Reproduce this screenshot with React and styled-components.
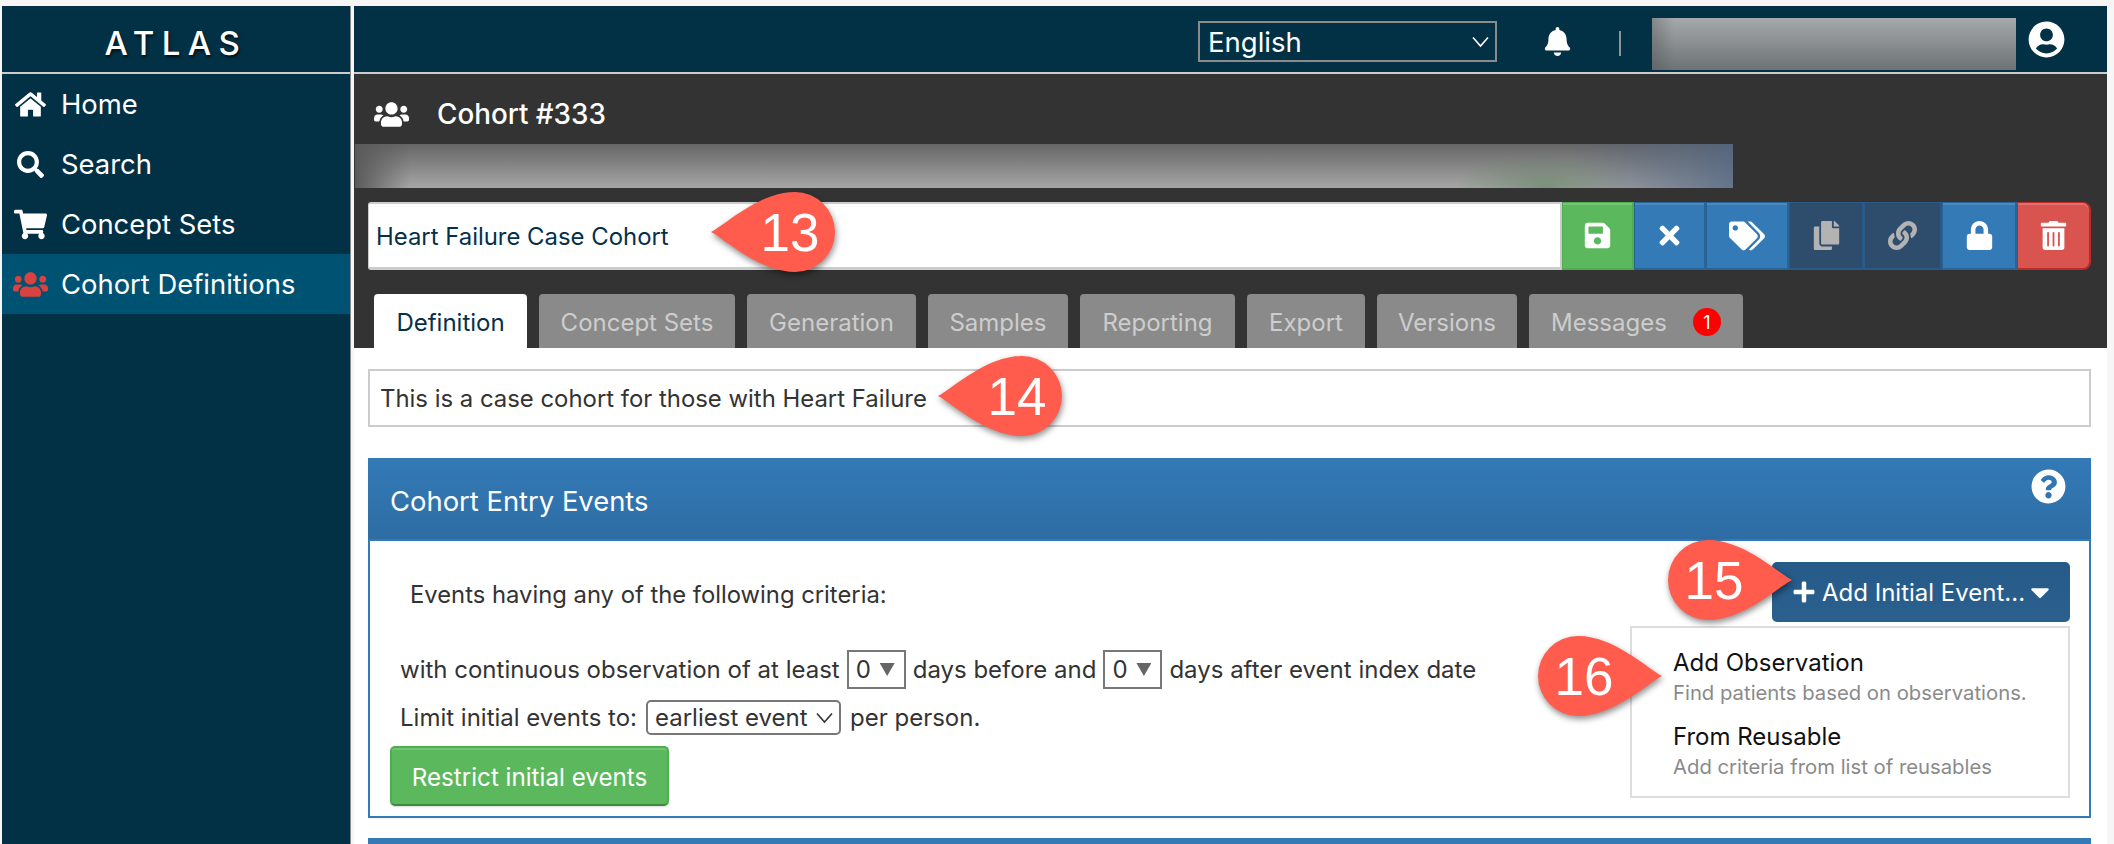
import React from "react";
import styled, { createGlobalStyle } from "styled-components";
import {
  FaBell,
  FaCaretDown,
  FaCopy,
  FaHome,
  FaLink,
  FaLock,
  FaPlus,
  FaQuestionCircle,
  FaSave,
  FaSearch,
  FaShoppingCart,
  FaTags,
  FaTimes,
  FaTrashAlt,
  FaUserCircle,
  FaUsers,
} from "react-icons/fa";

const GlobalStyle = createGlobalStyle`
  html, body {
    margin: 0;
    height: 100%;
    overflow: hidden;
    background: #f6f6f6;
    font-family: Inter, "Liberation Sans", sans-serif;
  }
  * { box-sizing: border-box; }
`;

const Page = styled.div`
  display: flex;
  height: 844px;
  padding: 6px 7px 0 2px;
  overflow: hidden;
`;

const Sidebar = styled.aside`
  flex: none;
  width: 349px;
  background: #023146;
  border-right: 1px solid #8a8a8a;
`;

const Brand = styled.div`
  height: 68px;
  padding-top: 8px;
  border-bottom: 2px solid #ccc;
  display: flex;
  align-items: center;
  justify-content: center;
  color: #fff;
  font-size: 33px;
  font-weight: 500;
  letter-spacing: 7.5px;
  text-shadow: 1px 2px 3px rgba(0, 0, 0, 0.7);
`;

const NavItem = styled.div`
  height: 60px;
  display: flex;
  align-items: center;
  gap: 13px;
  padding-left: 10px;
  color: #fff;
  font-size: 27.4px;
  background: ${(p) => (p.$active ? "#005272" : "transparent")};
`;

const NavIcon = styled.span`
  flex: none;
  width: 36px;
  display: flex;
  justify-content: center;
  font-size: ${(p) => p.$size}px;
  color: ${(p) => (p.$active ? "#d9423f" : "#fff")};
`;

const Main = styled.main`
  flex: 1;
  min-width: 0;
  margin-left: 3px;
  background: #fff;
`;

const TopBar = styled.header`
  height: 68px;
  background: #023146;
  border-bottom: 2px solid #ccc;
  display: flex;
  align-items: center;
  color: #fff;
  padding-left: 844px;
`;

const LanguageSelect = styled.div`
  width: 299px;
  height: 41px;
  margin-top: 5px;
  border: 2px solid #8b8b8b;
  display: flex;
  align-items: center;
  justify-content: space-between;
  padding: 0 6px 0 8px;
  font-size: 27.5px;
`;

const BellWrap = styled.span`
  display: flex;
  margin: 5px 0 0 46px;
  font-size: 29px;
`;

const Divider = styled.span`
  width: 2px;
  height: 25px;
  margin: 8px 31px 0 47px;
  background: #8d979d;
`;

const BlurredUser = styled.div`
  width: 364px;
  height: 52px;
  margin-top: 10px;
  background:
    linear-gradient(90deg, rgba(70, 76, 80, 0.35), transparent 6%),
    linear-gradient(180deg, #a6a9ab, #6c7275);
`;

const AvatarWrap = styled.span`
  display: flex;
  margin-left: 12px;
  font-size: 37px;
`;

const Hero = styled.section`
  background: #333;
  padding: 0 16px 0 14px;
`;

const TitleRow = styled.div`
  height: 70px;
  display: flex;
  align-items: center;
  gap: 28px;
  padding: 10px 0 0 6px;
  color: #fff;
  font-size: 27.8px;
  font-weight: 500;
  svg {
    font-size: 35px;
  }
`;

const BlurredBar = styled.div`
  width: 1378px;
  height: 44px;
  margin-left: -13px;
  background:
    radial-gradient(ellipse 90px 36px at 1190px 44px, rgba(90, 130, 90, 0.55), transparent),
    linear-gradient(90deg, transparent 88%, rgba(80, 100, 130, 0.75) 100%),
    linear-gradient(90deg, #5a5a5a, transparent 4%),
    linear-gradient(180deg, #666, #a6a6a6);
`;

const NameRow = styled.div`
  position: relative;
  display: flex;
  height: 68px;
  margin-top: 14px;
`;

const NameInput = styled.div`
  flex: 1;
  display: flex;
  align-items: center;
  padding: 2px 0 0 7px;
  background: #fff;
  border: 1px solid #ccc;
  border-top-width: 2px;
  border-bottom-width: 3px;
  border-right-width: 2px;
  border-radius: 3px 0 0 3px;
  color: #06304a;
  font-size: 23.9px;
`;

const tones = {
  green: ["#5cb85c", "#4cae4c", "#73c473"],
  blue: ["#337ab7", "#2a6396", "#4a8ac1"],
  navy: ["#2e4d6d", "#2a5a88", "#2e4d6d"],
  red: ["#d9534f", "#b92c28", "#e2706d"],
};

const ToolButton = styled.div`
  flex: none;
  width: ${(p) => p.$width}px;
  display: flex;
  align-items: center;
  justify-content: center;
  background: ${(p) => tones[p.$tone][0]};
  border: 1px solid ${(p) => tones[p.$tone][1]};
  border-width: 1px 2px 2px 1px;
  box-shadow: inset 0 2px 0 ${(p) => tones[p.$tone][2]};
  color: ${(p) => (p.$tone === "navy" ? "#b3b3b3" : "#fff")};
  font-size: ${(p) => p.$size || 29}px;
  border-radius: ${(p) => (p.$tone === "red" ? "0 8px 8px 0" : "0")};
`;

const Tabs = styled.nav`
  display: flex;
  gap: 12px;
  margin-top: 24px;
  padding: 0 0 0 6px;
`;

const Tab = styled.div`
  height: 54px;
  width: ${(p) => p.$width}px;
  display: flex;
  align-items: center;
  justify-content: ${(p) => (p.$badge ? "flex-start" : "center")};
  padding: 2px 0 0 ${(p) => (p.$badge ? "22px" : "0")};
  background: ${(p) => (p.$active ? "#fff" : "#8a8a8a")};
  color: ${(p) => (p.$active ? "#06304a" : "#cdcdcd")};
  border-radius: 4px 4px 0 0;
  font-size: 24px;
`;

const Badge = styled.span`
  width: 28px;
  height: 28px;
  margin-left: 26px;
  border-radius: 50%;
  background: #f00;
  color: #fff;
  font-size: 18px;
  display: flex;
  align-items: center;
  justify-content: center;
`;

const Content = styled.section`
  padding: 21px 16px 0 14px;
`;

const Description = styled.div`
  position: relative;
  height: 58px;
  border: 2px solid #ccc;
  display: flex;
  align-items: center;
  padding-left: 10px;
  color: #333;
  font-size: 23.9px;
`;

const Panel = styled.div`
  margin-top: 31px;
  border: 2px solid #337ab7;
  border-top: 0;
  box-shadow: 0 1px 2px rgba(0, 0, 0, 0.05);
`;

const PanelHeading = styled.div`
  height: 83px;
  margin: 0 -2px;
  padding: 4px 25px 0 22px;
  display: flex;
  align-items: center;
  justify-content: space-between;
  background: linear-gradient(180deg, #337ab7, #2e6da4);
  border-bottom: 2px solid #337ab7;
  color: #fff;
  font-size: 27.4px;
  svg {
    font-size: 35px;
    margin-top: -28px;
  }
`;

const PanelBody = styled.div`
  height: 275px;
  padding: 21px 19px 0 30px;
  display: flex;
  justify-content: space-between;
  color: #333;
  font-size: 24px;
`;

const Criteria = styled.div`
  display: flex;
  flex-direction: column;
  align-items: flex-start;
`;

const Lead = styled.div`
  height: 34px;
  margin: 15px 0 0 10px;
  display: flex;
  align-items: center;
  font-size: 23.8px;
`;

const Line = styled.div`
  display: flex;
  align-items: center;
  gap: ${(p) => p.$gap}px;
  margin-top: ${(p) => p.$top}px;
`;

const DaySelect = styled.div`
  width: 59px;
  height: 39px;
  border: 2px solid #777;
  display: flex;
  align-items: center;
  justify-content: space-between;
  padding: 0 9px 0 7px;
`;

const Triangle = styled.span`
  width: 15px;
  height: 13px;
  background: #666;
  clip-path: polygon(0 0, 100% 0, 50% 100%);
`;

const EventSelect = styled.div`
  width: 195px;
  height: 35px;
  border: 2px solid #777;
  border-radius: 5px;
  display: flex;
  align-items: center;
  justify-content: space-between;
  padding: 0 6px 0 7px;
`;

const RestrictButton = styled.div`
  width: 279px;
  height: 60px;
  margin: 11px 0 0 -10px;
  padding-top: 2px;
  display: flex;
  align-items: center;
  justify-content: center;
  background: #5cb85c;
  border: 2px solid #4cae4c;
  border-bottom-color: #3d8b3d;
  border-radius: 5px;
  box-shadow: inset 0 2px 0 #73c473, 0 1px 2px rgba(0, 0, 0, 0.15);
  color: #fff;
  font-size: 24.2px;
`;

const EventColumn = styled.div`
  position: relative;
  width: 440px;
  display: flex;
  flex-direction: column;
  align-items: flex-end;
`;

const AddButton = styled.div`
  width: 298px;
  height: 60px;
  display: flex;
  align-items: center;
  gap: 6px;
  padding-left: 20px;
  border-radius: 5px;
  background: linear-gradient(180deg, #265a88, #2b5f8e);
  color: #fff;
  font-size: 24px;
`;

const CaretWrap = styled.span`
  display: flex;
  margin-left: -6px;
  font-size: 30px;
`;

const Menu = styled.div`
  width: 440px;
  height: 172px;
  margin-top: 4px;
  border: 2px solid #ddd;
  padding: 18px 0 0 41px;
`;

const MenuTitle = styled.div`
  height: 32px;
  display: flex;
  align-items: center;
  color: #111;
  font-size: 24px;
  margin-top: ${(p) => p.$top}px;
`;

const MenuHint = styled.div`
  height: 29px;
  display: flex;
  align-items: center;
  color: #8a8a8a;
  font-size: 20.3px;
`;

const NextPanel = styled.div`
  height: 8px;
  margin-top: 20px;
  background: #337ab7;
`;

const CalloutWrap = styled.div`
  position: absolute;
  left: ${(p) => p.$left}px;
  top: ${(p) => p.$top}px;
  width: 124px;
  height: 80px;
  filter: drop-shadow(1px 3px 3px rgba(0, 0, 0, 0.45));
  z-index: 5;
  svg {
    display: block;
    transform: ${(p) => (p.$flip ? "scaleX(-1)" : "none")};
  }
`;

const CalloutNumber = styled.span`
  position: absolute;
  top: 0;
  bottom: 0;
  left: ${(p) => (p.$flip ? "2px" : "35px")};
  width: 88px;
  display: flex;
  align-items: center;
  justify-content: center;
  color: #fff;
  font-family: "Liberation Sans", sans-serif;
  font-size: 53px;
`;

const Callout = ({ n, left, top, flip }) => (
  <CalloutWrap $left={left} $top={top} $flip={flip}>
    <svg width="124" height="80" viewBox="0 0 124 80">
      <path d="M0 40 C14 33 48 0 84 0 A40 40 0 0 1 84 80 C48 80 14 47 0 40Z" fill="#ff5c4d" />
    </svg>
    <CalloutNumber $flip={flip}>{n}</CalloutNumber>
  </CalloutWrap>
);

const Chevron = () => (
  <svg width="17" height="12" viewBox="0 0 17 12" fill="none" stroke="currentColor" strokeWidth="1.6">
    <path d="M1 1.5 L8.5 10 L16 1.5" />
  </svg>
);

const navItems = [
  { label: "Home", icon: <FaHome />, size: 31 },
  { label: "Search", icon: <FaSearch />, size: 27 },
  { label: "Concept Sets", icon: <FaShoppingCart />, size: 33 },
  { label: "Cohort Definitions", icon: <FaUsers />, size: 35, active: true },
];

const toolButtons = [
  { tone: "green", width: 72, icon: <FaSave /> },
  { tone: "blue", width: 72, icon: <FaTimes /> },
  { tone: "blue", width: 83, icon: <FaTags />, size: 36 },
  { tone: "navy", width: 75, icon: <FaCopy /> },
  { tone: "navy", width: 78, icon: <FaLink /> },
  { tone: "blue", width: 75, icon: <FaLock /> },
  { tone: "red", width: 74, icon: <FaTrashAlt /> },
];

const tabs = [
  { label: "Definition", width: 153, active: true },
  { label: "Concept Sets", width: 196 },
  { label: "Generation", width: 169 },
  { label: "Samples", width: 140 },
  { label: "Reporting", width: 155 },
  { label: "Export", width: 118 },
  { label: "Versions", width: 140 },
  { label: "Messages", width: 214, badge: 1 },
];

const App = () => {
  return (
    <Page>
      <GlobalStyle />
      <Sidebar>
        <Brand>ATLAS</Brand>
        {navItems.map((item) => (
          <NavItem key={item.label} $active={item.active}>
            <NavIcon $active={item.active} $size={item.size}>
              {item.icon}
            </NavIcon>
            {item.label}
          </NavItem>
        ))}
      </Sidebar>

      <Main>
        <TopBar>
          <LanguageSelect>
            English
            <Chevron />
          </LanguageSelect>
          <BellWrap>
            <FaBell />
          </BellWrap>
          <Divider />
          <BlurredUser />
          <AvatarWrap>
            <FaUserCircle />
          </AvatarWrap>
        </TopBar>

        <Hero>
          <TitleRow>
            <FaUsers />
            Cohort #333
          </TitleRow>
          <BlurredBar />
          <NameRow>
            <NameInput>Heart Failure Case Cohort</NameInput>
            <Callout n="13" left={343} top={-10} />
            {toolButtons.map((b, i) => (
              <ToolButton key={i} $tone={b.tone} $width={b.width} $size={b.size}>
                {b.icon}
              </ToolButton>
            ))}
          </NameRow>
          <Tabs>
            {tabs.map((t) => (
              <Tab key={t.label} $width={t.width} $active={t.active} $badge={t.badge}>
                {t.label}
                {t.badge && <Badge>{t.badge}</Badge>}
              </Tab>
            ))}
          </Tabs>
        </Hero>

        <Content>
          <Description>
            This is a case cohort for those with Heart Failure
            <Callout n="14" left={568} top={-15} />
          </Description>

          <Panel>
            <PanelHeading>
              Cohort Entry Events
              <FaQuestionCircle />
            </PanelHeading>
            <PanelBody>
              <Criteria>
                <Lead>Events having any of the following criteria:</Lead>
                <Line $gap={7} $top={39}>
                  with continuous observation of at least
                  <DaySelect>
                    0<Triangle />
                  </DaySelect>
                  days before and
                  <DaySelect>
                    0<Triangle />
                  </DaySelect>
                  days after event index date
                </Line>
                <Line $gap={9} $top={11}>
                  Limit initial events to:
                  <EventSelect>
                    earliest event
                    <Chevron />
                  </EventSelect>
                  per person.
                </Line>
                <RestrictButton>Restrict initial events</RestrictButton>
              </Criteria>

              <EventColumn>
                <Callout n="15" left={38} top={-22} flip />
                <Callout n="16" left={-92} top={74} flip />
                <AddButton>
                  <FaPlus />
                  Add Initial Event...
                  <CaretWrap>
                    <FaCaretDown />
                  </CaretWrap>
                </AddButton>
                <Menu>
                  <MenuTitle $top={0}>Add Observation</MenuTitle>
                  <MenuHint>Find patients based on observations.</MenuHint>
                  <MenuTitle $top={13}>From Reusable</MenuTitle>
                  <MenuHint>Add criteria from list of reusables</MenuHint>
                </Menu>
              </EventColumn>
            </PanelBody>
          </Panel>
          <NextPanel />
        </Content>
      </Main>
    </Page>
  );
};

export default App;
